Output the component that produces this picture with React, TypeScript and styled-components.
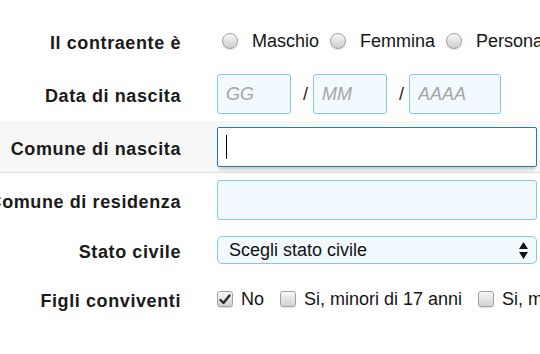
import React from "react";
import styled, { createGlobalStyle } from "styled-components";

const GlobalStyle = createGlobalStyle`
  html, body {
    margin: 0;
    padding: 0;
    background: #ffffff;
  }
  body {
    width: 540px;
    height: 354px;
    overflow: hidden;
    font-family: "Liberation Sans", Arial, Helvetica, sans-serif;
    color: #1a1a1a;
  }
`;

const Form = styled.form`
  display: flex;
  flex-direction: column;
  padding-top: 15px;
  width: 540px;
`;

const Row = styled.div<{ $h: number; $shaded?: boolean }>`
  display: flex;
  align-items: center;
  height: ${(p) => p.$h}px;
  background: ${(p) => (p.$shaded ? "#f7f7f7" : "transparent")};
  border-bottom: ${(p) => (p.$shaded ? "1px solid #dcdcdc" : "none")};
`;

const Label = styled.label`
  flex: 0 0 181px;
  width: 181px;
  display: flex;
  justify-content: flex-end;
  white-space: nowrap;
  font-weight: bold;
  font-size: 18px;
  letter-spacing: 0.6px;
  color: #1a1a1a;
  margin-right: 36px;
  margin-top: 5px;
`;

const Controls = styled.div`
  display: flex;
  align-items: center;
  white-space: nowrap;
  font-size: 18px;
  color: #151515;
`;

const RadioGroup = styled(Controls)`
  gap: 11px;
  padding-left: 5px;
`;

const Option = styled.span`
  display: flex;
  align-items: center;
`;

const Radio = styled.span`
  box-sizing: border-box;
  width: 16px;
  height: 16px;
  border-radius: 50%;
  border: 1px solid #a2a2a2;
  background: linear-gradient(#f6f6f6, #cfcfcf);
  box-shadow: 0 1px 1px rgba(0, 0, 0, 0.15);
  margin-right: 14px;
  flex: 0 0 auto;
`;

const CheckGroup = styled(Controls)`
  gap: 16px;
`;

const Checkbox = styled.span`
  box-sizing: border-box;
  width: 16px;
  height: 16px;
  border-radius: 3px;
  border: 1px solid #a2a2a2;
  background: linear-gradient(#f8f8f8, #d2d2d2);
  box-shadow: 0 1px 1px rgba(0, 0, 0, 0.12);
  margin-right: 8px;
  flex: 0 0 auto;
  display: flex;
  align-items: center;
  justify-content: center;
`;

const DateInput = styled.input<{ $w: number }>`
  box-sizing: border-box;
  width: ${(p) => p.$w}px;
  height: 40px;
  border: 1px solid #85c8ec;
  border-radius: 3px;
  background: #f2f9ff;
  padding: 0 0 0 8px;
  margin: 0;
  font-family: "Liberation Sans", Arial, sans-serif;
  font-size: 18px;
  font-style: italic;
  color: #333;
  outline: none;
  &::placeholder {
    color: #a6a6a6;
    font-style: italic;
  }
`;

const Slash = styled.span`
  margin: 0 5px 0 12px;
  font-size: 18px;
  color: #1a1a1a;
`;

const TextField = styled.input`
  box-sizing: border-box;
  width: 320px;
  height: 40px;
  border: 1px solid #85c8ec;
  border-radius: 3px;
  background: #f2f9ff;
  padding: 0 8px;
  margin: 0;
  font-family: "Liberation Sans", Arial, sans-serif;
  font-size: 18px;
  outline: none;
`;

const FocusedField = styled.div`
  box-sizing: border-box;
  width: 320px;
  height: 40px;
  border: 1px solid #1a7db8;
  border-radius: 2px;
  background: #ffffff;
  padding-left: 8px;
  display: flex;
  align-items: center;
  box-shadow: 0 5px 3px -2px rgba(0, 0, 0, 0.16);
`;

const Caret = styled.span`
  width: 1px;
  height: 24px;
  background: #000;
`;

const Select = styled.div`
  box-sizing: border-box;
  width: 320px;
  height: 28px;
  border: 1px solid #85c8ec;
  border-radius: 5px;
  background: #f2f9ff;
  padding: 0 8px 0 11px;
  display: flex;
  align-items: center;
  justify-content: space-between;
  font-size: 18px;
  color: #111;
`;

const CheckMark = () => (
  <svg width="12" height="11" viewBox="0 0 12 11">
    <path
      d="M1.5 6 L4.5 9 L10.5 1.5"
      fill="none"
      stroke="#2f2f2f"
      strokeWidth="2.4"
      strokeLinecap="round"
      strokeLinejoin="round"
    />
  </svg>
);

const UpDown = () => (
  <svg width="9" height="17" viewBox="0 0 9 17">
    <path d="M4.5 0 L9 7 L0 7 Z" fill="#111" />
    <path d="M0 10 L9 10 L4.5 17 Z" fill="#111" />
  </svg>
);

export default function App() {
  return (
    <>
      <GlobalStyle />
      <Form onSubmit={(e) => e.preventDefault()}>
        <Row $h={52}>
          <Label>Il contraente è</Label>
          <RadioGroup>
            <Option>
              <Radio />
              Maschio
            </Option>
            <Option>
              <Radio />
              Femmina
            </Option>
            <Option>
              <Radio />
              Persona giuridica
            </Option>
          </RadioGroup>
        </Row>
        <Row $h={54}>
          <Label>Data di nascita</Label>
          <Controls>
            <DateInput $w={74} placeholder="GG" readOnly />
            <Slash>/</Slash>
            <DateInput $w={74} placeholder="MM" readOnly />
            <Slash>/</Slash>
            <DateInput $w={92} placeholder="AAAA" readOnly />
          </Controls>
        </Row>
        <Row $h={51} $shaded>
          <Label>Comune di nascita</Label>
          <Controls>
            <FocusedField>
              <Caret />
            </FocusedField>
          </Controls>
        </Row>
        <Row $h={53}>
          <Label>Comune di residenza</Label>
          <Controls>
            <TextField readOnly />
          </Controls>
        </Row>
        <Row $h={48}>
          <Label>Stato civile</Label>
          <Controls>
            <Select>
              Scegli stato civile
              <UpDown />
            </Select>
          </Controls>
        </Row>
        <Row $h={50}>
          <Label>Figli conviventi</Label>
          <CheckGroup>
            <Option>
              <Checkbox>
                <CheckMark />
              </Checkbox>
              No
            </Option>
            <Option>
              <Checkbox />
              Si, minori di 17 anni
            </Option>
            <Option>
              <Checkbox />
              Si, maggiori di 17 anni
            </Option>
          </CheckGroup>
        </Row>
      </Form>
    </>
  );
}
